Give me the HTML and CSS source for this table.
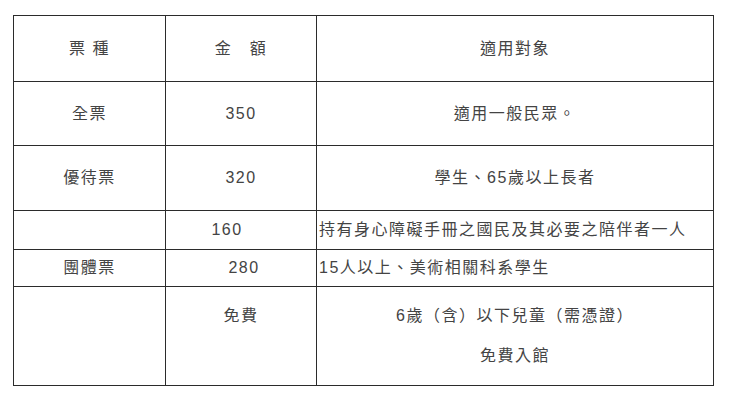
FILE: index.html
```html
<!DOCTYPE html>
<html lang="zh-Hant">
<head>
<meta charset="utf-8">
<link rel="stylesheet" href="styles.css">
</head>
<body>
<table class="fees">
  <colgroup>
    <col class="c1"><col class="c2"><col class="c3">
  </colgroup>
  <tr class="r-head">
    <td>票 種</td>
    <td>金　額</td>
    <td>適用對象</td>
  </tr>
  <tr class="r-tall">
    <td>全票</td>
    <td>350</td>
    <td>適用一般民眾。</td>
  </tr>
  <tr class="r-tall2">
    <td>優待票</td>
    <td>320</td>
    <td>學生、65歲以上長者</td>
  </tr>
  <tr class="r-short">
    <td></td>
    <td class="shift-left">160</td>
    <td class="left">持有身心障礙手冊之國民及其必要之陪伴者一人</td>
  </tr>
  <tr class="r-short2">
    <td>團體票</td>
    <td class="shift-right">280</td>
    <td class="left">15人以上、美術相關科系學生</td>
  </tr>
  <tr class="r-free">
    <td></td>
    <td><p>免費</p><p>&nbsp;</p></td>
    <td><p>6歲（含）以下兒童（需憑證）</p><p>免費入館</p></td>
  </tr>
</table>
</body>
</html>
```

FILE: styles.css
```css
html, body {
  margin: 0;
  padding: 0;
  background: #ffffff;
}

body {
  padding: 15px 0 0 13px;
  font-family: "Liberation Sans", "Noto Sans CJK TC", sans-serif;
  font-size: 16px;
  color: #444444;
}

.fees {
  border-collapse: collapse;
  table-layout: fixed;
  width: 700px;
}

.c1 { width: 152px; }
.c2 { width: 151px; }
.c3 { width: 397px; }

.fees td {
  border: 1px solid #2b2b2b;
  padding: 0;
  text-align: center;
  vertical-align: middle;
  letter-spacing: 1.5px;
  line-height: 22px;
}

.r-head td { height: 65px; }
.r-tall td { height: 63px; }
.r-tall2 td { height: 64px; }
.r-short td { height: 38px; }
.r-short2 td { height: 36px; }
.r-free td { height: 98px; }

.fees td.left {
  text-align: left;
  padding-left: 2px;
}

.fees td.shift-left { padding-right: 28px; }
.fees td.shift-right { padding-left: 6px; }

.fees p {
  margin: 0;
  line-height: 22px;
}

.fees p + p {
  margin-top: 18px;
}
```
